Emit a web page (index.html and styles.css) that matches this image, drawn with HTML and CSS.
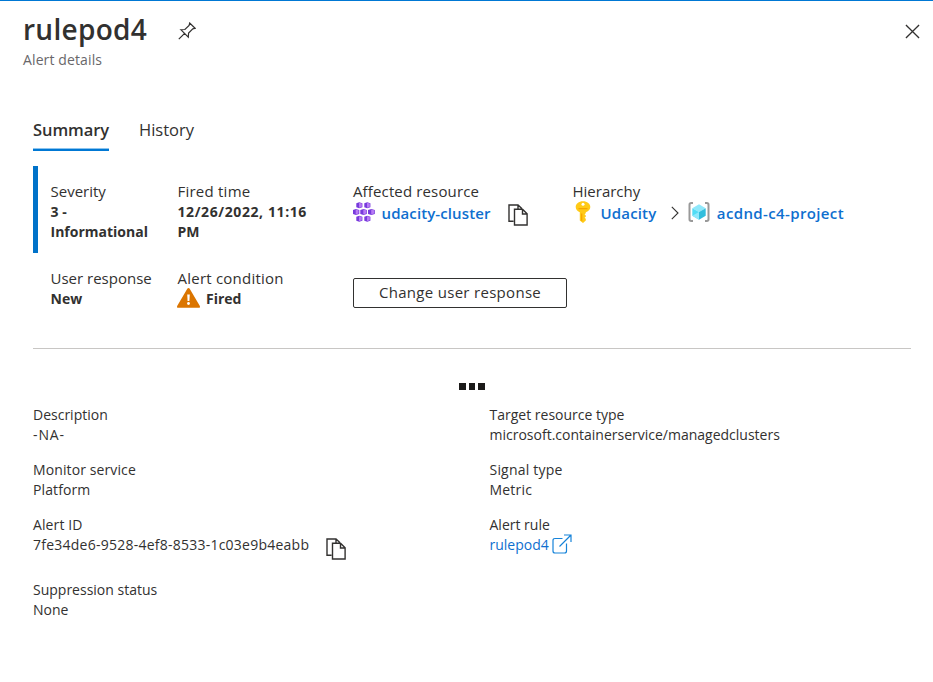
FILE: index.html
```html
<!DOCTYPE html>
<html lang="en">
<head>
<meta charset="utf-8">
<title>rulepod4 - Alert details</title>
<link rel="stylesheet" href="styles.css">
</head>
<body>
<svg width="0" height="0" class="defs">
  <symbol id="copy" viewBox="0 0 20 22"><path d="M5.500 17.200H1V1h9l3.800 3.500M10 1v3.500M6.500 5.200h8l4.600 4.600v11.200H6.500zM14.500 5.200v4.800h4.600" fill="none" stroke="#323130" stroke-width="1.400"/></symbol>
</svg>
<header class="header">
  <div class="title-block">
    <h1 class="title">rulepod4</h1>
    <p class="subtitle">Alert details</p>
  </div>
  <svg class="pin" viewBox="0 0 18 18"><path d="M.8 17.200 6.600 11.300M2.800 7.700l7.500 7.500 .3-4.200 4.200-4.200 2.300-.5L11.700 1l-.6 2.400L6.900 7.500z" fill="none" stroke="#323130" stroke-width="1.200"/></svg>
  <svg class="close" viewBox="0 0 16 16"><path d="M1 1l14 14M15 1L1 15" fill="none" stroke="#323130" stroke-width="1.400"/></svg>
</header>
<nav class="tabs">
  <a class="tab active">Summary</a>
  <a class="tab">History</a>
</nav>
<section class="summary">
  <div class="cell severity"><div class="label">Severity</div><div class="value">3 -<br>Informational</div></div>
  <div class="cell"><div class="label wide">Fired time</div><div class="value"><span class="date">12/26/2022, 11:16</span><br>PM</div></div>
  <div class="cell"><div class="label affected">Affected resource</div>
    <div class="links">
      <svg class="cluster" viewBox="0 0 22 20"><g fill="#773adc"><path d="M3.300 1.200 6.200.2l3.200 1v4l-3.200 1-2.900-1zM11.300 1.200l2.900-1 3.200 1v4l-3.200 1-2.900-1zM0 8l2.900-1 3.400 1v4l-3.400 1L0 12zM7.300 8l3.200-1 3.300 1v4l-3.300 1-3.200-1zM15 8l3.400-1 3.400 1v4l-3.400 1-3.400-1zM3.300 14.700l2.900-1 3.200 1v4l-3.200 1-2.900-1zM11.300 14.700l2.900-1 3.200 1v4l-3.200 1-2.900-1z"/></g><path d="M6 .7 8.800 1.500v3.300L6 5.700zM14 .7l2.800.8v3.300l-2.800.9zM2.700 7.500l2.800.8v3.300l-2.800.9zM10.300 7.500l2.800.8v3.300l-2.800.9zM18.200 7.500l2.800.8v3.300l-2.800.9zM6 14.200l2.800.8v3.300l-2.800.9zM14 14.200l2.800.8v3.300l-2.800.9z" fill="#b77af4"/></svg>
      <a class="link resource">udacity-cluster</a>
      <svg class="copy"><use href="#copy"/></svg>
    </div>
  </div>
  <div class="cell"><div class="label">Hierarchy</div>
    <div class="links">
      <svg class="key" viewBox="0 0 16 22"><path d="M8 .3C3.800.3.700 3 .700 6c0 2.200 1.400 4 4.100 5.200v8.300L8 22l2.800-2.500v-1.800l-1.200-1 1.200-1v-1.300l-1.200-1.100 1.200-1v-1.100C13.800 10 15.300 8.200 15.300 6 15.300 3 12.200.3 8 .3z" fill="#ffca16"/><path d="M6 12.500h1.300v7.800L6 19.500zM3.500 7h9v1.200h-9z" fill="#f7a500"/><circle cx="8" cy="3.300" r="1.500" fill="#fff"/></svg>
      <a class="link udacity">Udacity</a>
      <svg class="chevron" viewBox="0 0 8 14"><path d="M.8.8 7 7 .8 13.200" fill="none" stroke="#323130" stroke-width="1.100"/></svg>
      <svg class="group" viewBox="0 0 22 20"><path d="M5 1H3.200Q1.500 1 1.500 2.700v14.600Q1.500 19 3.200 19H5M17 1h1.800q1.700 0 1.700 1.700v14.600q0 1.700-1.700 1.700H17" fill="none" stroke="#999" stroke-width="2"/><path d="M11 2.300l6.700 3.900L11 10 4.300 6.200z" fill="#8fe8fb"/><path d="M4.300 6.200 11 10v7.700l-6.700-3.900z" fill="#50dcf5"/><path d="M17.700 6.200 11 10v7.700l6.700-3.900z" fill="#32bedd"/><path d="M4.300 13.800 11 10v7.700z" fill="#8fe8fb"/></svg>
      <a class="link project">acdnd-c4-project</a>
    </div>
  </div>
  <div class="cell indent"><div class="label">User response</div><div class="value">New</div></div>
  <div class="cell"><div class="label wide">Alert condition</div><div class="value fired"><svg class="warn" viewBox="0 0 23 20"><path d="M11.500 0q.8 0 1.200.8l10 17q.9 2-1 2H1.300q-1.900 0-1-2l10-17q.4-.8 1.200-.8z" fill="#db7500"/><path d="M10.200 6.500h2.600l-.4 6.500h-1.800z" fill="#fff"/><circle cx="11.500" cy="15.500" r="1.400" fill="#fff"/></svg>Fired</div></div>
  <div class="cell"><button class="change">Change user response</button></div>
</section>
<div class="dots"><i></i><i></i><i></i></div>
<section class="details">
  <div class="col">
    <div class="item">Description<br><span class="na">-NA-</span></div>
    <div class="item monitor">Monitor service<br>Platform</div>
    <div class="item"><span class="monitor">Alert ID</span><div class="id"><span class="guid">7fe34de6-9528-4ef8-8533-1c03e9b4eabb</span><svg class="copy"><use href="#copy"/></svg></div></div>
    <div class="item">Suppression status<br>None</div>
  </div>
  <div class="col">
    <div class="item">Target resource type<br>microsoft.containerservice/managedclusters</div>
    <div class="item signal">Signal type<br>Metric</div>
    <div class="item">Alert rule<div class="rule"><a>rulepod4</a><svg class="ext" viewBox="0 0 20 20"><path d="M10.500 4.500H3Q1 4.500 1 6.500V17q0 2 2 2h9.500q2 0 2-2V9.500M7.500 12.500 18.500 1.500M12 1h7v7" fill="none" stroke="#1683d9" stroke-width="1.200"/></svg></div></div>
  </div>
</section>
</body>
</html>
```
FILE: styles.css
```css
* { box-sizing: border-box; }
body { margin: 0; border-top: 1px solid #0078d4; background: #fff; color: #323130; font: 14px/20px "Open Sans", "Noto Sans", sans-serif; }
h1, p { margin: 0; }
svg { display: block; flex: none; }
.defs { position: absolute; }
.header { display: flex; align-items: flex-start; height: 106px; padding: 8px 13px 0 23px; }
.title-block { width: 155px; }
.title { font-size: 28px; line-height: 40px; font-weight: 600; letter-spacing: .28px; }
.subtitle { margin-top: 1px; color: #69676a; letter-spacing: .12px; }
.pin { width: 18px; height: 18px; margin-top: 13px; }
.close { width: 15px; height: 15px; margin: 15px 0 0 auto; }
.tabs { display: flex; gap: 30px; padding: 10px 33px 0; font-size: 16.5px; line-height: 26px; }
.tab { height: 34px; }
.active { font-weight: 600; border-bottom: 2px solid #0078d4; box-shadow: inset 0 -1px #8cc4ee; letter-spacing: -.08px; }
.summary { display: grid; grid-template-columns: 144.500px 175.500px 219.500px 1fr; grid-template-rows: 87px 96px; height: 183px; margin: 15px 22px 0 33px; border-bottom: 1px solid #c8c6c4; font-size: 15px; }
.cell { padding-top: 16px; white-space: nowrap; }
.severity { border-left: 5px solid #0072c9; padding-left: 12.500px; }
.indent { padding-left: 17.500px; }
.label { line-height: 18px; padding-bottom: 2px; }
.wide { letter-spacing: .23px; }
.affected { letter-spacing: .14px; }
.value { font-weight: 700; font-size: 14px; }
.date { letter-spacing: .6px; }
.links { display: flex; align-items: center; height: 22px; }
.link { color: #0f6fcf; font-weight: 600; }
.resource { letter-spacing: .1px; }
.udacity { letter-spacing: .15px; }
.project { letter-spacing: .37px; }
.cluster { width: 22px; height: 20px; margin: 0 6.500px 2px 0; }
.copy { width: 20px; height: 22px; margin: 4px 0 0 17px; }
.key { width: 16px; height: 22px; margin: 0 10px 2px 2px; }
.chevron { width: 8px; height: 14px; margin: 0 9px 0 15px; }
.group { width: 22px; height: 20px; margin: 0 6.500px 2px 0; }
.fired { display: flex; align-items: center; gap: 6px; height: 20px; margin-left: -.5px; }
.warn { width: 23px; height: 20px; margin-bottom: 2px; }
.change { display: block; width: 214px; height: 30px; margin-top: 9px; padding: 0 0 2px; background: #fff; border: 1px solid #323130; border-radius: 2px; font: 500 15px/20px "Open Sans", sans-serif; letter-spacing: .3px; color: #323130; }
.dots { display: flex; gap: 3px; width: 26px; margin: 34px 0 15px 459px; }
.dots i { flex: 1; height: 7px; background: #1b1a19; }
.details { display: grid; grid-template-columns: 456.500px 1fr; padding-left: 33px; }
.item { margin-bottom: 15px; }
.monitor { letter-spacing: .11px; }
.signal { letter-spacing: .2px; }
.na { letter-spacing: .9px; }
.id { display: flex; height: 30px; }
.guid { letter-spacing: .24px; }
.id .copy { margin-top: 3px; }
.rule { display: flex; color: #0f6fcf; }
.ext { width: 20px; height: 20px; margin: -1px 0 0 3.500px; }
```
